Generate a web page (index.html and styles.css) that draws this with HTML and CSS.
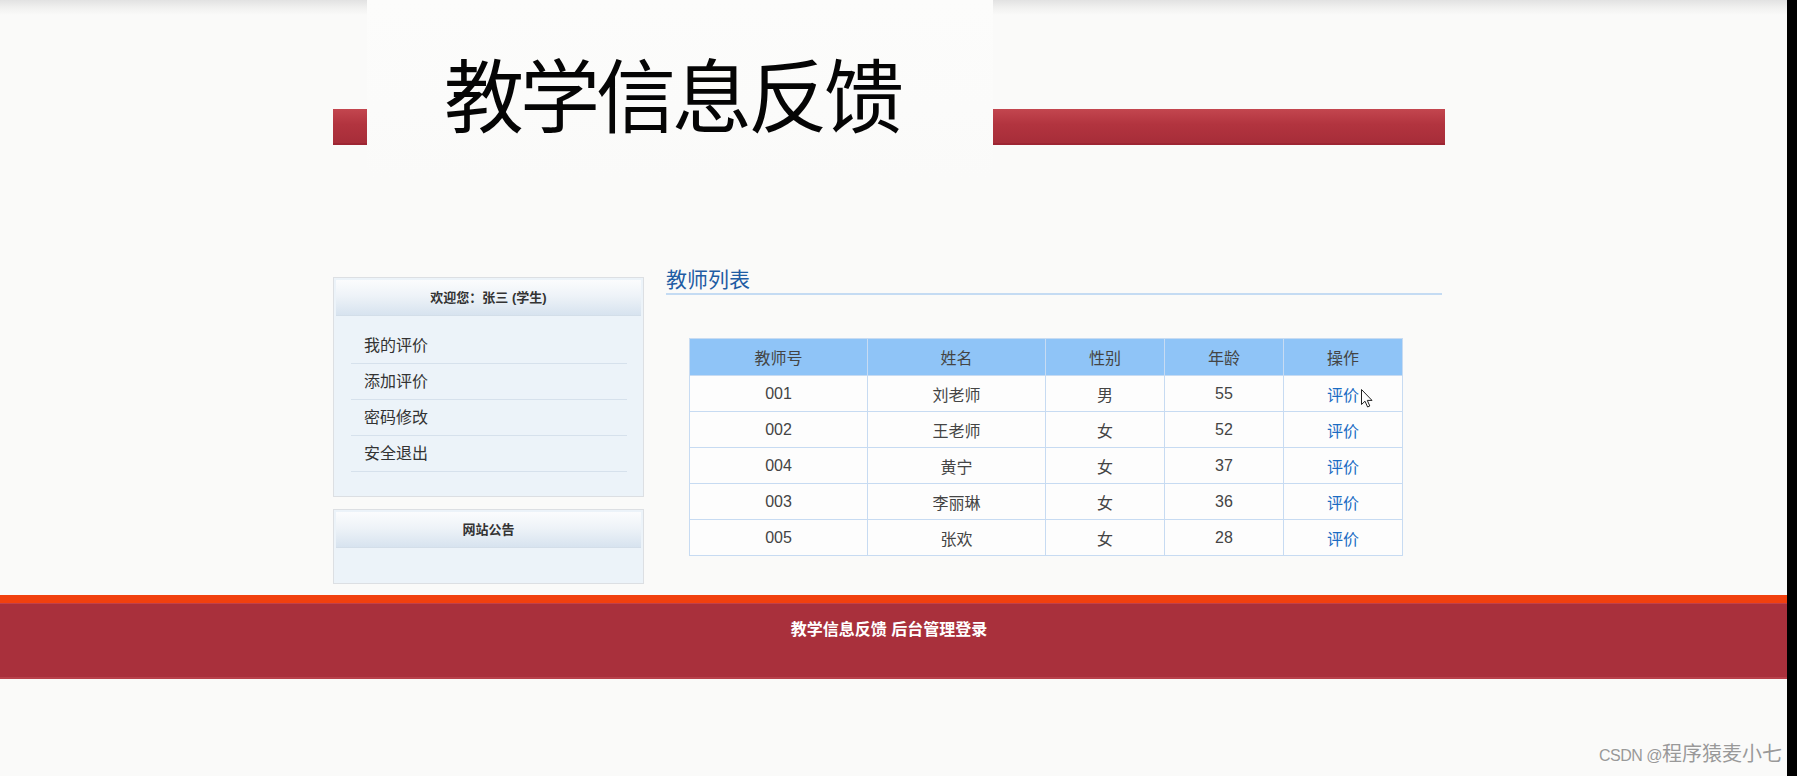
FILE: index.html
```html
<!DOCTYPE html>
<html lang="zh-CN">
<head>
<meta charset="utf-8">
<title>教学信息反馈</title>
<link rel="stylesheet" href="styles.css">
</head>
<body>
<div class="screen">
  <div class="page">
    <header class="top">
      <div class="top-inner">
        <div class="bar bar-left"></div>
        <div class="logo"><span class="logo-text">教学信息反馈</span></div>
        <div class="bar bar-right"></div>
      </div>
    </header>
    <main class="main">
      <aside class="side">
        <div class="box">
          <div class="box-head">欢迎您：张三 (学生)</div>
          <ul class="menu">
            <li>我的评价</li>
            <li>添加评价</li>
            <li>密码修改</li>
            <li>安全退出</li>
          </ul>
        </div>
        <div class="box">
          <div class="box-head">网站公告</div>
          <div class="notice-body"></div>
        </div>
      </aside>
      <section class="content">
        <h2 class="content-title">教师列表</h2>
        <div class="table-wrap">
          <table class="grid">
            <colgroup>
              <col class="c-wide"><col class="c-wide"><col class="c-narrow"><col class="c-narrow"><col class="c-narrow">
            </colgroup>
            <thead>
              <tr><th>教师号</th><th>姓名</th><th>性别</th><th>年龄</th><th>操作</th></tr>
            </thead>
            <tbody>
              <tr><td>001</td><td>刘老师</td><td>男</td><td>55</td><td><a class="act">评价</a></td></tr>
              <tr><td>002</td><td>王老师</td><td>女</td><td>52</td><td><a class="act">评价</a></td></tr>
              <tr><td>004</td><td>黄宁</td><td>女</td><td>37</td><td><a class="act">评价</a></td></tr>
              <tr><td>003</td><td>李丽琳</td><td>女</td><td>36</td><td><a class="act">评价</a></td></tr>
              <tr><td>005</td><td>张欢</td><td>女</td><td>28</td><td><a class="act">评价</a></td></tr>
            </tbody>
          </table>
          <svg class="cursor" width="12" height="19" viewBox="0 0 12 19">
            <path d="M0.5 0.5 L0.5 15.5 L4 12.2 L6.6 18 L8.8 17 L6.3 11.4 L11 11.4 Z" fill="#fff" stroke="#222" stroke-width="1" stroke-linejoin="round"/>
          </svg>
        </div>
      </section>
    </main>
    <footer class="foot">
      <div class="foot-text">教学信息反馈 后台管理登录</div>
    </footer>
    <div class="watermark"><span class="wm-latin">CSDN @</span>程序猿麦小七</div>
  </div>
  <div class="edge"></div>
</div>
</body>
</html>
```

FILE: styles.css
```css
html, body {
  margin: 0;
  padding: 0;
  height: 776px;
  overflow: hidden;
}
body {
  font-family: "Liberation Sans", "Noto Sans CJK SC", sans-serif;
  color: #333;
}
.screen {
  display: flex;
  height: 776px;
}
.page {
  flex: 1;
  position: relative;
  background: linear-gradient(to bottom, #e2e2e2 0px, #f1f1f0 8px, #fafaf9 15px, #fafaf9 100%);
}
.edge {
  width: 10px;
  background: #000;
}

/* header */
.top {
  height: 262px;
}
.top-inner {
  width: 1112px;
  margin-left: 333px;
  display: flex;
  align-items: flex-start;
}
.bar {
  height: 34px;
  margin-top: 109px;
  background: linear-gradient(to bottom, #c3464f 0%, #b2343f 45%, #a72d39 100%);
  border-bottom: 2px solid #9d2533;
}
.bar-left {
  width: 34px;
}
.bar-right {
  flex: 1;
}
.logo {
  width: 626px;
  height: 180px;
  background: linear-gradient(to bottom, #fcfcfb 0%, #fbfbfa 60%, #fafaf9 100%);
}
.logo-text {
  display: block;
  padding: 51px 0 0 77px;
  font-family: "Noto Sans CJK SC", sans-serif;
  font-size: 80px;
  line-height: 80px;
  letter-spacing: -4px;
  font-weight: 400;
  color: #050505;
}

/* main */
.main {
  width: 1112px;
  margin-left: 333px;
  height: 333px;
  display: flex;
  gap: 22px;
}
.side {
  width: 311px;
  padding-top: 15px;
  display: flex;
  flex-direction: column;
  gap: 12px;
}
.box {
  border: 1px solid #dcdfe3;
  background: #ecf3f9;
}
.box-head {
  margin: 2px 2px 0;
  height: 35px;
  line-height: 35px;
  text-align: center;
  font-size: 13px;
  font-weight: bold;
  color: #333;
  background: linear-gradient(to bottom, #fbfcfd 0%, #eef3f8 45%, #d7e3ef 100%);
  border-bottom: 1px solid #d3dee9;
}
.menu {
  list-style: none;
  margin: 0;
  padding: 12px 16px 24px 17px;
}
.menu li {
  height: 35px;
  line-height: 35px;
  padding-left: 13px;
  border-bottom: 1px solid #d6e1ec;
  font-size: 16px;
  color: #333;
}
.notice-body {
  height: 35px;
}

.content {
  width: 776px;
}
.content-title {
  margin: 0;
  padding-top: 5px;
  height: 26px;
  line-height: 26px;
  font-size: 21px;
  font-weight: normal;
  color: #1f5da4;
  border-bottom: 2px solid #c4dbf3;
}
.table-wrap {
  position: relative;
  margin: 43px 0 0 23px;
  width: 714px;
}
.grid {
  width: 714px;
  table-layout: fixed;
  border-collapse: collapse;
  border: 1px solid #c7dbf2;
}
.c-wide {
  width: 178px;
}
.c-narrow {
  width: 119px;
}
.grid th,
.grid td {
  border: 1px solid #c7dbf2;
  padding: 0;
  text-align: center;
  font-size: 16px;
  color: #444;
}
.grid th {
  height: 36px;
  font-weight: normal;
  background: #8fc4f7;
}
.grid td {
  height: 35px;
  background: #fdfdfd;
}
.act {
  color: #1b6cc3;
  text-decoration: none;
}
.cursor {
  position: absolute;
  left: 672px;
  top: 51px;
}

/* footer */
.foot {
  height: 76px;
  border-top: 8px solid #f1400f;
  background: #a9303c;
  box-shadow: inset 0 1px 0 #c2404a, inset 0 -2px 0 #b8414b;
}
.foot-text {
  width: 1112px;
  margin-left: 333px;
  padding-top: 17px;
  line-height: 20px;
  text-align: center;
  font-size: 16px;
  font-weight: bold;
  color: #fff;
}

.watermark {
  position: absolute;
  right: 5px;
  bottom: 9px;
  font-family: "Noto Sans CJK SC", sans-serif;
  font-size: 20px;
  line-height: 22px;
  color: #999;
  text-shadow: 0 0 2px #fff;
}
.wm-latin {
  font-family: "Liberation Sans", sans-serif;
  font-size: 16px;
  letter-spacing: -0.5px;
}
```
